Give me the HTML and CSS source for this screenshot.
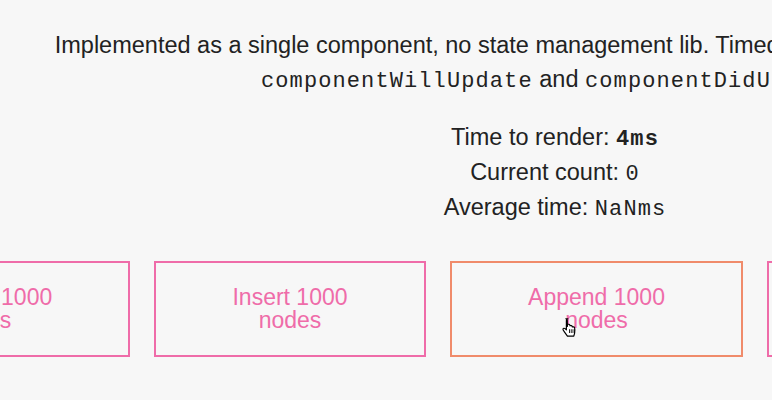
FILE: index.html
```html
<!DOCTYPE html>
<html>
<head>
<meta charset="utf-8">
<link rel="stylesheet" href="styles.css">
</head>
<body>
<div class="page">
  <p class="desc">Implemented as a single component, no state management lib. Timed with React lifecycle hooks<br><code>componentWillUpdate</code> and <code>componentDidUpdate</code>.</p>
  <div class="stats">
    <div>Time to render: <code class="strong">4ms</code></div>
    <div>Current count: <code>0</code></div>
    <div>Average time: <code>NaNms</code></div>
  </div>
  <div class="buttons">
    <div class="btn btn-prepend">Prepend 1000<br>nodes</div>
    <div class="btn">Insert 1000<br>nodes</div>
    <div class="btn btn-append hover">Append 1000<br>nodes
      <svg class="cursor" width="17" height="20" viewBox="0 0 14 17"><path d="M3 1.5c.8 0 1.3.6 1.3 1.4V8l.2-1.6c.8-.5 1.8-.2 2 .6l.1.5c.7-.5 1.7-.2 1.9.6l.1.4c.7-.4 1.7-.1 1.9.8.3 1.4.3 3 0 4.4l-.7 2.6H4.4l-2.6-3.7c-.5-.7-1.3-1.6-1.2-2.3.1-.8 1.2-1 1.8-.4l1.1 1.1V2.9c0-.8.5-1.4 1.3-1.4z" fill="#fff" stroke="#000" stroke-width="1" stroke-linejoin="round"/><path d="M6.3 10.5v3M8.2 10.5v3M10.1 10.5v3" stroke="#000" stroke-width="0.9"/></svg>
    </div>
    <div class="btn">Remove 1000<br>nodes</div>
  </div>
</div>
</body>
</html>
```
FILE: styles.css
```css
html, body {
  margin: 0;
  padding: 0;
  background: #f7f7f7;
  overflow: hidden;
}
.page {
  width: 1110px;
  text-align: center;
  color: #222;
  font-family: "Liberation Sans", Arial, sans-serif;
  font-size: 23.5px;
}
code {
  font-family: "Liberation Mono", "Courier New", monospace;
  font-size: 22px;
  line-height: 1;
  letter-spacing: 1.1px;
}
code.strong {
  font-weight: bold;
}
.desc {
  margin: 28px 0 0;
  line-height: 34px;
  white-space: nowrap;
}
.stats {
  margin-top: 24px;
  line-height: 35px;
}
.buttons {
  display: flex;
  gap: 24px;
  margin-left: -170px;
  margin-top: 36px;
}
.btn {
  position: relative;
  flex: 0 0 272px;
  height: 96px;
  box-sizing: border-box;
  border: 2px solid #ef6ca9;
  color: #ef6ca9;
  font-size: 23px;
  line-height: 23px;
  display: flex;
  align-items: center;
  justify-content: center;
  text-align: center;
}
.btn-prepend {
  flex-basis: 300px;
}
.btn-append {
  flex-basis: 293px;
}
.btn.hover {
  border-color: #f08b6b;
}
.cursor {
  position: absolute;
  left: 110px;
  top: 54px;
}
```
